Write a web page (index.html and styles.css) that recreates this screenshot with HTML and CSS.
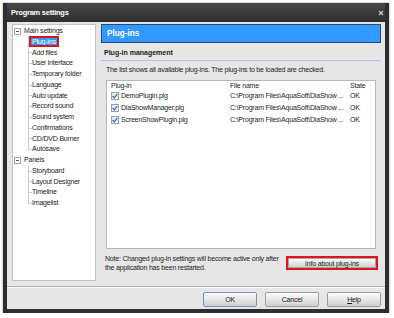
FILE: index.html
```html
<!DOCTYPE html>
<html lang="en">
<head>
  <meta charset="UTF-8" />
  <title>Program settings</title>
  <link rel="stylesheet" href="styles.css">
</head>
<body>
  <div class="window">
    <div class="titlebar">
      <span>Program settings</span>
      <svg class="close" width="6" height="6" viewBox="0 0 6 6"><path d="M1 1L5 5M5 1L1 5" stroke="#c8c8c8" stroke-width="1.3"/></svg>
    </div>
    <div class="client">
      <div class="main">
        <div class="tree">
          <div class="root"><span class="expander"></span>Main settings</div>
          <div class="branch">
            <div class="node"><span class="label selected">Plug-ins</span></div>
            <div class="node"><span class="label">Add files</span></div>
            <div class="node"><span class="label">User interface</span></div>
            <div class="node"><span class="label">Temporary folder</span></div>
            <div class="node"><span class="label">Language</span></div>
            <div class="node"><span class="label">Auto update</span></div>
            <div class="node"><span class="label">Record sound</span></div>
            <div class="node"><span class="label">Sound system</span></div>
            <div class="node"><span class="label">Confirmations</span></div>
            <div class="node"><span class="label">CD/DVD Burner</span></div>
            <div class="node"><span class="label">Autosave</span></div>
          </div>
          <div class="root"><span class="expander"></span>Panels</div>
          <div class="branch">
            <div class="node"><span class="label">Storyboard</span></div>
            <div class="node"><span class="label">Layout Designer</span></div>
            <div class="node"><span class="label">Timeline</span></div>
            <div class="node"><span class="label">Imagelist</span></div>
          </div>
        </div>

        <div class="page">
          <div class="page-head">Plug-ins</div>
          <div class="group-title">Plug-in management</div>
          <p class="hint">The list shows all available plug-ins. The plug-ins to be loaded are checked.</p>
          <div class="list">
            <div class="list-row list-head">
              <span>Plug-in</span><span>File name</span><span>State</span>
            </div>
            <div class="list-row">
              <span><i class="check"><svg width="6" height="6" viewBox="0 0 6 6"><path d="M0.6 3L2.3 4.8L5.4 0.9" fill="none" stroke="#3a5d9e" stroke-width="1.1"/></svg></i>DemoPlugin.plg</span>
              <span>C:\Program Files\AquaSoft\DiaShow ...</span><span>OK</span>
            </div>
            <div class="list-row">
              <span><i class="check"><svg width="6" height="6" viewBox="0 0 6 6"><path d="M0.6 3L2.3 4.8L5.4 0.9" fill="none" stroke="#3a5d9e" stroke-width="1.1"/></svg></i>DiaShowManager.plg</span>
              <span>C:\Program Files\AquaSoft\DiaShow ...</span><span>OK</span>
            </div>
            <div class="list-row">
              <span><i class="check"><svg width="6" height="6" viewBox="0 0 6 6"><path d="M0.6 3L2.3 4.8L5.4 0.9" fill="none" stroke="#3a5d9e" stroke-width="1.1"/></svg></i>ScreenShowPlugin.plg</span>
              <span>C:\Program Files\AquaSoft\DiaShow ...</span><span>OK</span>
            </div>
          </div>
          <div class="note-row">
            <p class="note">Note: Changed plug-in settings will become active only after<br>the application has been restarted.</p>
            <div class="focus-ring"><button class="btn wide">Info about plug-ins</button></div>
          </div>
        </div>
      </div>

      <div class="footer">
        <button class="btn default">OK</button>
        <button class="btn">Cancel</button>
        <button class="btn"><u>H</u>elp</button>
      </div>
    </div>
  </div>
</body>
</html>
```

FILE: styles.css
```css
* { box-sizing: border-box; }
body {
  margin: 0;
  background: #fff;
  font-family: "Liberation Sans", Arial, sans-serif;
  font-size: 7px;
  letter-spacing: -0.2px;
  color: #1c1c1c;
}
p { margin: 0; }

.window {
  margin: 3px 0 0 3px;
  width: 386px;
  height: 310px;
  display: flex;
  flex-direction: column;
  background: #2e2e2e;
  border: 4px solid #2e2e2e;
  border-top: 0;
  box-shadow: 0 0 2px rgba(0,0,0,0.45);
}
.titlebar {
  height: 19px;
  flex: none;
  display: flex;
  align-items: center;
  justify-content: space-between;
  padding: 0 1px 0 4px;
  background: linear-gradient(#484848, #2e2e2e);
  color: #fff;
  font-weight: bold;
  font-size: 7.4px;
}
.client {
  flex: 1;
  display: flex;
  flex-direction: column;
  background: #e6e6e6;
  padding: 2px 4px 0 5px;
}
.main { display: flex; gap: 5px; height: 257px; }

/* tree */
.tree {
  width: 84px;
  background: #fff;
  border: 1px solid #c4c4c4;
  padding-top: 1px;
  line-height: 10.75px;
}
.root { display: flex; align-items: center; padding-left: 1px; }
.expander {
  width: 7px;
  height: 7px;
  margin-right: 3px;
  border: 1px solid #a4a4a4;
  background: #fff;
  display: flex;
  align-items: center;
  justify-content: center;
}
.expander::after { content: ""; width: 3px; height: 1px; background: #555; }
.branch { margin-left: 15px; }
.node {
  padding-left: 3px;
  background:
    linear-gradient(#cacaca, #cacaca) no-repeat 0 0 / 1px 100%,
    linear-gradient(#cacaca, #cacaca) no-repeat 0 50% / 4px 1px;
}
.node:last-child {
  background:
    linear-gradient(#cacaca, #cacaca) no-repeat 0 0 / 1px 50%,
    linear-gradient(#cacaca, #cacaca) no-repeat 0 50% / 4px 1px;
}
.label { padding: 0 1px; }
.label.selected {
  background: #3399ff;
  color: #fff;
  outline: 2px solid #d8141e;
}

/* right page */
.page { flex: 1; display: flex; flex-direction: column; }
.page-head {
  height: 19px;
  display: flex;
  align-items: center;
  padding-left: 5px;
  background: #3399ff;
  border: 1px solid #1b4c82;
  color: #fff;
  font-weight: bold;
  font-size: 8.2px;
  letter-spacing: 0;
}
.group-title {
  margin-top: 5px;
  padding: 0 0 2px 3px;
  line-height: 10px;
  font-weight: bold;
  letter-spacing: 0;
  border-bottom: 1px solid #b9c9db;
  box-shadow: 0 1px 0 #d6e2ee;
}
.hint { margin: 4px 0 0 5px; line-height: 10px; }
.list {
  margin: 5px 5px 0;
  height: 169px;
  background: #fff;
  border: 1px solid #b8b8b8;
}
.list-row {
  display: grid;
  grid-template-columns: 119px 120px 1fr;
  align-items: center;
  height: 12px;
  padding-left: 4px;
}
.list-row span { display: flex; align-items: center; white-space: nowrap; line-height: 10px; }
.list-head { height: 9px; }
.check {
  width: 8px;
  height: 8px;
  flex: none;
  margin-right: 2px;
  border: 1px solid #8ea2bf;
  background: linear-gradient(135deg, #e4e8f0, #fff);
  display: flex;
  align-items: center;
  justify-content: center;
}
.note-row {
  display: flex;
  justify-content: space-between;
  align-items: flex-start;
  margin-top: 5px;
  padding: 0 3px 0 4px;
}
.note { line-height: 9px; white-space: nowrap; }
.focus-ring {
  margin-top: 2px;
  width: 92px;
  height: 14px;
  flex: none;
  border: 2px solid #de1620;
  display: flex;
}

/* buttons */
.btn {
  width: 54px;
  height: 15px;
  padding: 0;
  font-family: inherit;
  font-size: 7px;
  letter-spacing: -0.2px;
  color: #1c1c1c;
  border: 1px solid #9c9c9c;
  border-radius: 2px;
  background: linear-gradient(#fbfbfb, #e6e6e6 50%, #cfcfcf);
}
.btn.wide { width: 100%; height: 100%; border-color: #a6a6a6; border-radius: 0; }
.btn.default { border-color: #6f95c4; }
.footer {
  margin: 5px -4px 0 -5px;
  padding: 5px 4px 0 0;
  display: flex;
  justify-content: flex-end;
  gap: 8px;
  border-top: 1px solid #b0b0b0;
  box-shadow: inset 0 1px 0 #fafafa;
}
```
